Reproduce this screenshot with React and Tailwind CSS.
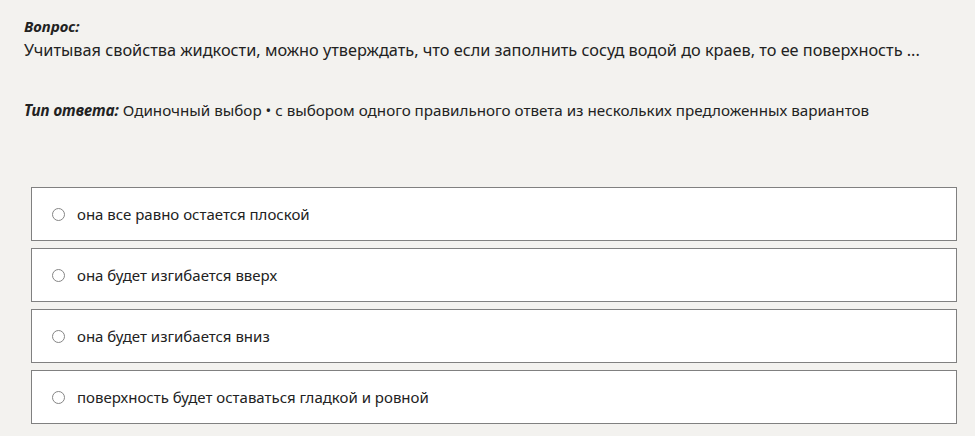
export default function App() {
  const options = [
    "она все равно остается плоской",
    "она будет изгибается вверх",
    "она будет изгибается вниз",
    "поверхность будет оставаться гладкой и ровной",
  ];
  return (
    <div className="min-h-[436px] w-[975px] bg-[#f3f2ef] text-[#222] font-['Noto_Sans',sans-serif] text-[15px] leading-[22px]">
      <div className="px-[24px] pt-[15px]">
        <div className="font-bold italic">Вопрос:</div>
        <div className="mt-[1px] text-[16.3px] leading-[24px]">Учитывая свойства жидкости, можно утверждать, что если заполнить сосуд водой до краев, то ее поверхность ...</div>
        <div className="mt-[37px] text-[15.2px]">
          <span className="font-bold italic">Тип ответа:</span> Одиночный выбор • с выбором одного правильного ответа из нескольких предложенных вариантов
        </div>
      </div>
      <div className="ml-[31px] w-[926px] mt-[66px] flex flex-col gap-[7px]">
        {options.map((o) => (
          <div key={o} className="h-[54px] bg-white border border-[#808080] flex items-center pl-[20px]">
            <span className="w-[13px] h-[13px] rounded-full border border-[#858585] bg-white shrink-0"></span>
            <span className="ml-[12px]">{o}</span>
          </div>
        ))}
      </div>
    </div>
  );
}
